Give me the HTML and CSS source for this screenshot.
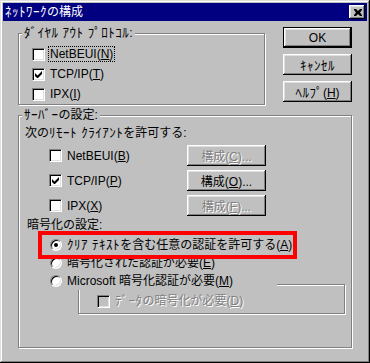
FILE: index.html
```html
<!DOCTYPE html>
<html lang="ja">
  <head>
    <meta charset="UTF-8" />
    <meta name="viewport" content="width=device-width, initial-scale=1.0" />
    <title>ネットワークの構成</title>
    <link rel="stylesheet" href="styles.css">
  </head>
  <body>
    <div class="window">
      <div class="titlebar">
        <span class="title"><span class="hw">ﾈｯﾄﾜｰｸ</span>の構成</span>
        <span class="close">
          <svg width="8" height="7" viewBox="0 0 8 7"><path d="M0 0h2l2 2 2-2h2v1L6 3.5 8 6v1H6L4 5 2 7H0V6l2-2.5L0 1z" fill="#000"/></svg>
        </span>
      </div>
      <div class="content">
        <div class="top">
          <div class="group dialout">
            <span class="group-title"><span class="hw">ﾀﾞｲﾔﾙ ｱｳﾄ ﾌﾟﾛﾄｺﾙ</span>:</span>
            <div class="check-row">
              <span class="checkbox"></span>
              <span class="label focus">NetBEUI(<u>N</u>)</span>
            </div>
            <div class="check-row">
              <span class="checkbox checked">
                <svg width="7" height="7" viewBox="0 0 7 7"><path d="M0 2v3l2 2h1l4-4V0L2.5 4.5z" fill="#000"/></svg>
              </span>
              <span class="label">TCP/IP(<u>T</u>)</span>
            </div>
            <div class="check-row">
              <span class="checkbox"></span>
              <span class="label">IPX(<u>I</u>)</span>
            </div>
          </div>
          <div class="buttons">
            <button class="btn default">OK</button>
            <button class="btn"><span class="hw">ｷｬﾝｾﾙ</span></button>
            <button class="btn"><span class="hw">ﾍﾙﾌﾟ</span>(<u>H</u>)</button>
          </div>
        </div>

        <div class="group server">
          <span class="group-title"><span class="hw">ｻｰﾊﾞｰ</span>の設定:</span>
          <div class="caption">次の<span class="hw">ﾘﾓｰﾄ ｸﾗｲｱﾝﾄ</span>を許可する:</div>
          <div class="client-row">
            <div class="client">
              <span class="checkbox"></span>
              <span class="label">NetBEUI(<u>B</u>)</span>
            </div>
            <button class="btn config" disabled>構成(<u>C</u>)...</button>
          </div>
          <div class="client-row">
            <div class="client">
              <span class="checkbox checked">
                <svg width="7" height="7" viewBox="0 0 7 7"><path d="M0 2v3l2 2h1l4-4V0L2.5 4.5z" fill="#000"/></svg>
              </span>
              <span class="label">TCP/IP(<u>P</u>)</span>
            </div>
            <button class="btn config">構成(<u>O</u>)...</button>
          </div>
          <div class="client-row">
            <div class="client">
              <span class="checkbox"></span>
              <span class="label">IPX(<u>X</u>)</span>
            </div>
            <button class="btn config" disabled>構成(<u>F</u>)...</button>
          </div>

          <div class="caption encrypt">暗号化の設定:</div>
          <div class="radio-row highlight">
            <span class="radio selected"></span>
            <span class="label"><span class="hw">ｸﾘｱ ﾃｷｽﾄ</span>を含む任意の認証を許可する(<u>A</u>)</span>
          </div>
          <div class="radio-row">
            <span class="radio"></span>
            <span class="label">暗号化された認証が必要(<u>E</u>)</span>
          </div>
          <div class="radio-row ms">
            <span class="radio"></span>
            <span class="label">Microsoft 暗号化認証が必要(<u>M</u>)</span>
          </div>
          <div class="subgroup">
            <div class="check-row disabled">
              <span class="checkbox"></span>
              <span class="label"><span class="hw">ﾃﾞｰﾀ</span>の暗号化が必要(<u>D</u>)</span>
            </div>
          </div>
        </div>
      </div>
    </div>
  </body>
</html>
```

FILE: styles.css
```css
body {
  margin: 0;
  font-family: "Liberation Sans", "Noto Sans CJK JP", sans-serif;
  font-size: 12px;
  color: #000;
}
.hw {
  font-size: 13px;
  letter-spacing: 0.5px;
}
.window {
  box-sizing: border-box;
  width: 370px;
  height: 363px;
  padding: 3px;
  background-color: #c0c0c0;
  box-shadow: inset -1px -1px #000, inset 1px 1px #dfdfdf,
    inset -2px -2px #808080, inset 2px 2px #fff;
}
.titlebar {
  display: flex;
  align-items: center;
  justify-content: space-between;
  height: 18px;
  padding-left: 2px;
  background-color: #000080;
  color: #fff;
}
.title {
  line-height: 18px;
}
.close {
  display: flex;
  align-items: center;
  justify-content: center;
  box-sizing: border-box;
  width: 16px;
  height: 14px;
  margin-right: 2px;
  padding-left: 1px;
  background-color: #c0c0c0;
  box-shadow: inset -1px -1px #000, inset 1px 1px #fff,
    inset -2px -2px #808080, inset 2px 2px #dfdfdf;
}
.content {
  padding: 0 15px;
}
.top {
  display: flex;
  align-items: flex-start;
  gap: 18px;
}
.group {
  position: relative;
  box-sizing: border-box;
  border: 1px solid #808080;
  box-shadow: 1px 1px #fff, inset 1px 1px #fff;
}
.group-title {
  position: absolute;
  top: -9px;
  left: 3px;
  padding: 0 2px;
  line-height: 16px;
  background-color: #c0c0c0;
}
.dialout {
  width: 247px;
  height: 72px;
  margin-top: 12px;
  padding: 10px 0 0 13px;
}
.check-row {
  display: flex;
  align-items: center;
  height: 20px;
}
.checkbox {
  display: flex;
  flex-shrink: 0;
  align-items: center;
  justify-content: center;
  box-sizing: border-box;
  width: 13px;
  height: 13px;
  border: 1px solid;
  border-color: #808080 #fff #fff #808080;
  box-shadow: inset 1px 1px #000, inset -1px -1px #dfdfdf;
  background-color: #fff;
}
.label {
  margin-left: 5px;
  line-height: 14px;
  white-space: nowrap;
}
.focus {
  margin-left: 4px;
  padding: 0 1px;
  outline: 1px dotted #000;
}
.buttons {
  display: flex;
  flex-direction: column;
  gap: 6px;
  width: 69px;
  margin-top: 6px;
}
.btn {
  box-sizing: border-box;
  height: 21px;
  padding: 0;
  border: none;
  font: inherit;
  color: #000;
  background-color: #c0c0c0;
  box-shadow: inset -1px -1px #000, inset 1px 1px #fff,
    inset -2px -2px #808080, inset 2px 2px #dfdfdf;
}
.btn.default {
  border: 1px solid #000;
}
.btn:disabled {
  color: #808080;
  text-shadow: 1px 1px #fff;
}
.server {
  width: 334px;
  height: 233px;
  margin-top: 10px;
  padding: 9px 0 0 6px;
}
.caption {
  line-height: 16px;
}
.client-row {
  display: flex;
  align-items: center;
  height: 21px;
  margin-top: 4px;
  padding-left: 24px;
}
.client-row:first-of-type {
  margin-top: 1px;
}
.client {
  display: flex;
  align-items: center;
  width: 138px;
}
.config {
  width: 79px;
}
.encrypt {
  margin: 1px 0 3px 2px;
}
.radio-row {
  display: flex;
  align-items: center;
  box-sizing: border-box;
  width: 249px;
  height: 18px;
  margin-left: 18px;
  padding-left: 7px;
}
.highlight {
  outline: 4px solid #f00;
  outline-offset: 1px;
}
.radio {
  display: flex;
  flex-shrink: 0;
  align-items: center;
  justify-content: center;
  box-sizing: border-box;
  width: 12px;
  height: 12px;
  border: 1px solid;
  border-color: #808080 #fff #fff #808080;
  border-radius: 50%;
  box-shadow: inset 1px 1px #000, inset -1px -1px #dfdfdf;
  background-color: #fff;
}
.radio.selected::after {
  content: "";
  width: 4px;
  height: 4px;
  border-radius: 50%;
  background-color: #000;
}
.ms {
  position: relative;
  z-index: 1;
  width: 234px;
  background-color: #c0c0c0;
}
.subgroup {
  position: relative;
  box-sizing: border-box;
  width: 267px;
  height: 30px;
  margin: -6px 0 0 53px;
  padding: 6px 0 0 18px;
  border: 1px solid #808080;
  box-shadow: 1px 1px #fff, inset 1px 1px #fff;
}
.disabled .checkbox {
  background-color: #c0c0c0;
}
.disabled .label {
  color: #808080;
  text-shadow: 1px 1px #fff;
}
```
